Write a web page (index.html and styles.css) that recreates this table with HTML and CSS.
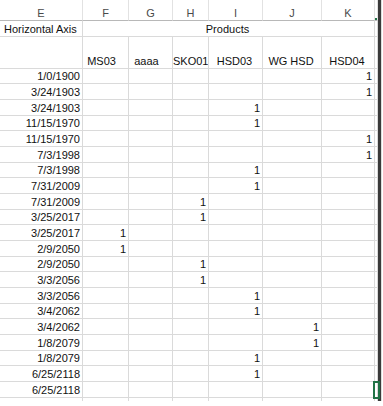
FILE: index.html
```html
<!DOCTYPE html>
<html lang="en">
<head>
  <meta charset="UTF-8">
  <title>Horizontal Axis - Products</title>
  <link rel="stylesheet" href="styles.css">
</head>
<body>
  <div class="sheet">
    <table class="grid">
      <colgroup>
        <col class="c-e"><col class="c-f"><col class="c-g"><col class="c-h">
        <col class="c-i"><col class="c-j"><col class="c-k"><col class="c-l">
      </colgroup>
      <thead>
        <tr class="letters">
          <th>E</th><th>F</th><th>G</th><th>H</th><th>I</th><th>J</th><th>K</th><th class="active"></th>
        </tr>
      </thead>
      <tbody class="top">
        <tr class="r2">
          <td class="label">Horizontal Axis</td>
          <td colspan="6" class="center">Products</td>
          <td></td>
        </tr>
        <tr class="r3">
          <td></td>
          <td class="center nudge">MS03</td>
          <td class="center nudge">aaaa</td>
          <td class="center">SKO01</td>
          <td class="center">HSD03</td>
          <td class="center">WG HSD</td>
          <td class="center">HSD04</td>
          <td></td>
        </tr>
      </tbody>
      <tbody class="data" id="rows"></tbody>
      <tbody>
        <tr class="tail"><td></td><td></td><td></td><td></td><td></td><td></td><td></td><td></td></tr>
      </tbody>
    </table>
  </div>

  <script>
    // date, then the column (0 = F ... 5 = K) holding a 1
    const rows = [
      ["1/0/1900", 5], ["3/24/1903", 5], ["3/24/1903", 3], ["11/15/1970", 3],
      ["11/15/1970", 5], ["7/3/1998", 5], ["7/3/1998", 3], ["7/31/2009", 3],
      ["7/31/2009", 2], ["3/25/2017", 2], ["3/25/2017", 0], ["2/9/2050", 0],
      ["2/9/2050", 2], ["3/3/2056", 2], ["3/3/2056", 3], ["3/4/2062", 3],
      ["3/4/2062", 4], ["1/8/2079", 4], ["1/8/2079", 3], ["6/25/2118", 3],
      ["6/25/2118", -1]
    ];

    document.getElementById("rows").innerHTML = rows.map((r, i) => {
      let cells = `<td class="num">${r[0]}</td>`;
      for (let c = 0; c < 6; c++) {
        cells += `<td class="num">${c === r[1] ? 1 : ""}</td>`;
      }
      const last = i === rows.length - 1;
      cells += `<td${last ? ' class="sel"' : ""}></td>`;
      return `<tr>${cells}</tr>`;
    }).join("");
  </script>
</body>
</html>
```

FILE: styles.css
```css
body {
  margin: 0;
  background-color: #fff;
  font-family: 'Liberation Sans', Arial, sans-serif;
}
.sheet {
  width: 378px;
  margin-top: -3px;
  box-shadow: 3px 3px 1px #3a3a3a;
  background-color: #fff;
}
.grid {
  table-layout: fixed;
  width: 378px;
  border-collapse: separate;
  border-spacing: 0;
  font-size: 11px;
  line-height: 13px;
  color: #111;
}
.c-e { width: 83px; }
.c-f { width: 46px; }
.c-g { width: 44px; }
.c-h { width: 36px; }
.c-i { width: 54px; }
.c-j { width: 59px; }
.c-k { width: 53px; }
.c-l { width: 3px; }
th, td {
  padding: 0 2px 0 0;
  border-right: 1px solid #dadada;
  border-bottom: 1px solid #dadada;
  vertical-align: bottom;
  white-space: nowrap;
  overflow: hidden;
}
th:last-child, td:last-child {
  padding: 0;
}
.letters th {
  height: 23px;
  font-weight: normal;
  color: #4a4a4a;
  text-align: center;
  padding: 0;
  border-bottom-color: #b8b8b8;
  border-right-color: #e2e2e2;
}
.letters .active {
  box-shadow: inset 0 -2px #217346;
}
.r2 td {
  height: 15px;
}
.r3 td {
  height: 31px;
}
.label {
  padding-left: 4px;
  text-align: left;
}
.center {
  text-align: center;
}
.nudge {
  padding-right: 8px;
}
.num {
  text-align: right;
}
.data tr td {
  height: 15px;
}
.data tr:nth-child(3n+1) td {
  height: 14px;
}
.tail td {
  height: 3px;
  border-bottom: none;
}
.sel {
  position: relative;
  overflow: visible;
}
.sel::after {
  content: "";
  position: absolute;
  left: -2px;
  top: -1px;
  right: -3px;
  bottom: -2px;
  border: 2px solid #217346;
}
```
